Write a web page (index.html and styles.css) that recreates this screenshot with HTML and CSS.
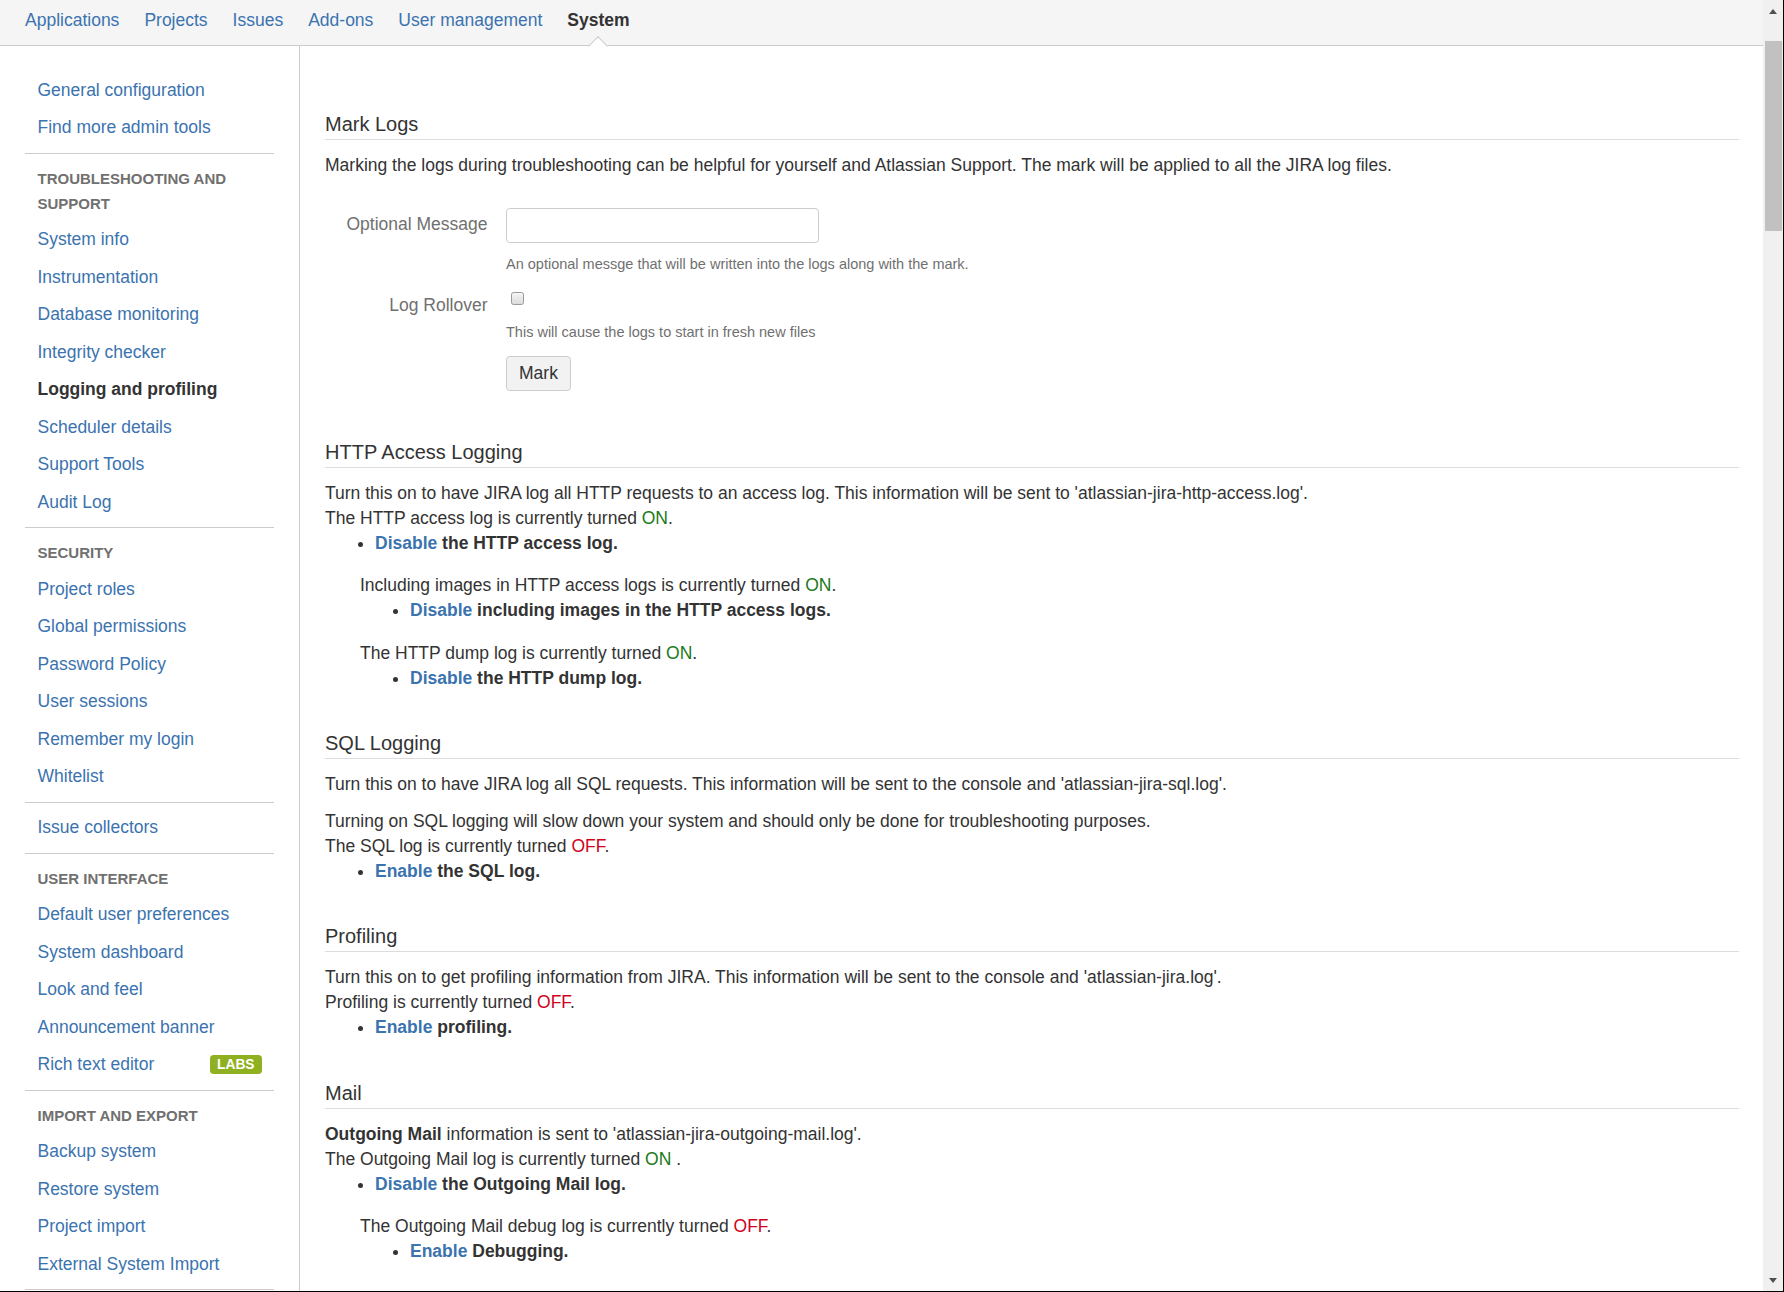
FILE: index.html
```html
<!DOCTYPE html>
<html lang="en">
<head>
    <meta charset="UTF-8">
    <title>Logging and profiling - System</title>
    <link rel="stylesheet" href="styles.css">
</head>
<body>
<div class="window">
    <div class="viewport">
        <header class="topnav">
            <a class="topnav-item" href="#">Applications</a>
            <a class="topnav-item" href="#">Projects</a>
            <a class="topnav-item" href="#">Issues</a>
            <a class="topnav-item" href="#">Add-ons</a>
            <a class="topnav-item" href="#">User management</a>
            <a class="topnav-item active" href="#">System<span class="notch"></span></a>
        </header>

        <div class="page">
            <nav class="sidebar">
                <div class="nav-group">
                    <a class="nav-item" href="#">General configuration</a>
                    <a class="nav-item" href="#">Find more admin tools</a>
                </div>
                <div class="nav-group">
                    <div class="nav-heading">Troubleshooting and support</div>
                    <a class="nav-item" href="#">System info</a>
                    <a class="nav-item" href="#">Instrumentation</a>
                    <a class="nav-item" href="#">Database monitoring</a>
                    <a class="nav-item" href="#">Integrity checker</a>
                    <a class="nav-item selected" href="#">Logging and profiling</a>
                    <a class="nav-item" href="#">Scheduler details</a>
                    <a class="nav-item" href="#">Support Tools</a>
                    <a class="nav-item" href="#">Audit Log</a>
                </div>
                <div class="nav-group">
                    <div class="nav-heading">Security</div>
                    <a class="nav-item" href="#">Project roles</a>
                    <a class="nav-item" href="#">Global permissions</a>
                    <a class="nav-item" href="#">Password Policy</a>
                    <a class="nav-item" href="#">User sessions</a>
                    <a class="nav-item" href="#">Remember my login</a>
                    <a class="nav-item" href="#">Whitelist</a>
                </div>
                <div class="nav-group">
                    <a class="nav-item" href="#">Issue collectors</a>
                </div>
                <div class="nav-group">
                    <div class="nav-heading">User interface</div>
                    <a class="nav-item" href="#">Default user preferences</a>
                    <a class="nav-item" href="#">System dashboard</a>
                    <a class="nav-item" href="#">Look and feel</a>
                    <a class="nav-item" href="#">Announcement banner</a>
                    <a class="nav-item" href="#">Rich text editor <span class="lozenge">Labs</span></a>
                </div>
                <div class="nav-group">
                    <div class="nav-heading">Import and export</div>
                    <a class="nav-item" href="#">Backup system</a>
                    <a class="nav-item" href="#">Restore system</a>
                    <a class="nav-item" href="#">Project import</a>
                    <a class="nav-item" href="#">External System Import</a>
                </div>
                <div class="nav-group"></div>
            </nav>

            <main class="content">
                <h2 class="section-title">Mark Logs</h2>
                <p>Marking the logs during troubleshooting can be helpful for yourself and Atlassian Support. The mark will be applied to all the JIRA log files.</p>

                <form class="mark-form">
                    <div class="field-group">
                        <label for="mark-message">Optional Message</label>
                        <div class="field">
                            <input class="text-input" type="text" id="mark-message">
                            <div class="description">An optional messge that will be written into the logs along with the mark.</div>
                        </div>
                    </div>
                    <div class="field-group">
                        <label class="checkbox-label" for="rollover">Log Rollover</label>
                        <div class="field">
                            <div class="checkbox-row"><input class="checkbox" type="checkbox" id="rollover"></div>
                            <div class="description">This will cause the logs to start in fresh new files</div>
                        </div>
                    </div>
                    <div class="buttons">
                        <button class="button" type="button">Mark</button>
                    </div>
                </form>

                <h2 class="section-title">HTTP Access Logging</h2>
                <p>Turn this on to have JIRA log all HTTP requests to an access log. This information will be sent to 'atlassian-jira-http-access.log'.<br>
                    The HTTP access log is currently turned <span class="on">ON</span>.</p>
                <ul class="actions">
                    <li><a href="#">Disable</a> the HTTP access log.</li>
                </ul>
                <div class="sub-block">
                    Including images in HTTP access logs is currently turned <span class="on">ON</span>.
                    <ul class="actions">
                        <li><a href="#">Disable</a> including images in the HTTP access logs.</li>
                    </ul>
                </div>
                <div class="sub-block">
                    The HTTP dump log is currently turned <span class="on">ON</span>.
                    <ul class="actions">
                        <li><a href="#">Disable</a> the HTTP dump log.</li>
                    </ul>
                </div>

                <h2 class="section-title">SQL Logging</h2>
                <p>Turn this on to have JIRA log all SQL requests. This information will be sent to the console and 'atlassian-jira-sql.log'.</p>
                <p>Turning on SQL logging will slow down your system and should only be done for troubleshooting purposes.<br>
                    The SQL log is currently turned <span class="off">OFF</span>.</p>
                <ul class="actions">
                    <li><a href="#">Enable</a> the SQL log.</li>
                </ul>

                <h2 class="section-title">Profiling</h2>
                <p>Turn this on to get profiling information from JIRA. This information will be sent to the console and 'atlassian-jira.log'.<br>
                    Profiling is currently turned <span class="off">OFF</span>.</p>
                <ul class="actions">
                    <li><a href="#">Enable</a> profiling.</li>
                </ul>

                <h2 class="section-title">Mail</h2>
                <p><strong>Outgoing Mail</strong> information is sent to 'atlassian-jira-outgoing-mail.log'.<br>
                    The Outgoing Mail log is currently turned <span class="on">ON</span> .</p>
                <ul class="actions">
                    <li><a href="#">Disable</a> the Outgoing Mail log.</li>
                </ul>
                <div class="sub-block">
                    The Outgoing Mail debug log is currently turned <span class="off">OFF</span>.
                    <ul class="actions">
                        <li><a href="#">Enable</a> Debugging.</li>
                    </ul>
                </div>
            </main>
        </div>
    </div>

    <div class="scrollbar">
        <div class="sb-button"><span class="arrow-up"></span></div>
        <div class="sb-thumb"></div>
        <div class="sb-track"></div>
        <div class="sb-button"><span class="arrow-down"></span></div>
    </div>
</div>
</body>
</html>
```

FILE: styles.css
```css
html, body {
    margin: 0;
    padding: 0;
}

body {
    font-family: "Liberation Sans", Arial, sans-serif;
    font-size: 17.5px;
    line-height: 25px;
    color: #333;
    background: #fff;
}

a {
    color: #3b73af;
    text-decoration: none;
}

.window {
    display: flex;
    height: 1292px;
    box-sizing: border-box;
    border-right: 1px solid #000;
    border-bottom: 1px solid #000;
    overflow: hidden;
}

.viewport {
    flex: 1;
    display: flex;
    flex-direction: column;
    overflow: hidden;
}

/* top navigation */
.topnav {
    display: flex;
    flex-shrink: 0;
    height: 45px;
    padding-left: 12.5px;
    background: #f5f5f5;
    border-bottom: 1px solid #ccc;
}

.topnav-item {
    position: relative;
    display: block;
    padding: 0 12.5px;
    line-height: 40px;
    height: 45px;
}

.topnav-item.active {
    color: #333;
    font-weight: bold;
}

.notch {
    position: absolute;
    left: 50%;
    bottom: -7.6px;
    width: 14px;
    height: 14px;
    background: #fff;
    border-top: 1px solid #ccc;
    border-left: 1px solid #ccc;
    box-sizing: border-box;
    transform: translateX(-50%) rotate(45deg);
}

.page {
    flex: 1;
    display: flex;
    min-height: 0;
}

/* sidebar */
.sidebar {
    flex-shrink: 0;
    width: 300px;
    box-sizing: border-box;
    padding: 19px 25px 0;
    border-right: 1px solid #ccc;
}

.nav-group {
    padding: 6.25px 0;
}

.nav-group + .nav-group {
    border-top: 1px solid #ccc;
}

.nav-heading {
    padding: 6px 12.5px 5px;
    font-size: 15px;
    font-weight: bold;
    line-height: 25px;
    text-transform: uppercase;
    color: #707070;
}

.nav-item {
    display: block;
    padding: 6.25px 12.5px;
    line-height: 25px;
}

.nav-item.selected {
    color: #333;
    font-weight: bold;
}

.lozenge {
    float: right;
    margin-top: 3px;
    padding: 0 7px;
    line-height: 19px;
    font-size: 13.75px;
    font-weight: bold;
    text-transform: uppercase;
    color: #fff;
    background: #8eb021;
    border-radius: 3.75px;
}

/* main content */
.content {
    flex: 1;
    min-width: 0;
    padding: 25px 24px 0 25px;
}

.section-title {
    margin: 37.5px 0 0;
    font-size: 20px;
    font-weight: normal;
    line-height: 30px;
    color: #333;
    border-bottom: 1px solid #ddd;
}

.content p {
    margin: 12.5px 0 0;
}

.content .section-title + p {
    margin-top: 13px;
}

.content p + p {
    margin-top: 11.5px;
}

.on {
    color: #1a7a1a;
}

.off {
    color: #d0021b;
}

.actions {
    margin: 0;
    padding-left: 50px;
}

.actions li {
    font-weight: bold;
}

.sub-block {
    margin: 17.5px 0 0 35px;
}

/* mark logs form */
.mark-form {
    margin-top: 25px;
}

.field-group {
    display: grid;
    grid-template-columns: 162.5px 1fr;
    column-gap: 18.5px;
    padding: 5px 0;
}

.field-group label {
    padding-top: 4.5px;
    text-align: right;
    color: #707070;
}

.field-group .checkbox-label {
    padding-top: 6px;
}

.text-input {
    display: block;
    width: 312.5px;
    height: 35px;
    box-sizing: border-box;
    margin: 0;
    padding: 4px 6px;
    font: inherit;
    border: 1px solid #ccc;
    border-radius: 3.75px;
    background: #fff;
}

.description {
    margin-top: 9px;
    font-size: 14.5px;
    line-height: 25px;
    color: #707070;
}

.checkbox-row {
    height: 25px;
    box-sizing: border-box;
    padding-top: 5px;
}

.checkbox {
    appearance: none;
    display: block;
    width: 13px;
    height: 13px;
    margin: 0 0 0 5px;
    border: 1px solid #9a9a9a;
    border-radius: 2.5px;
    background: linear-gradient(#f4f4f4, #dcdcdc);
}

.field .checkbox-row + .description {
    margin-top: 8.5px;
}

.buttons {
    padding: 6.25px 0 8px 181px;
}

.button {
    height: 35px;
    padding: 0 12px;
    font: inherit;
    color: #333;
    background: #f2f2f2;
    border: 1px solid #ccc;
    border-radius: 3.75px;
}

/* window scrollbar */
.scrollbar {
    display: flex;
    flex-direction: column;
    flex-shrink: 0;
    width: 20px;
    background: #f0f0f0;
}

.sb-button {
    display: flex;
    align-items: center;
    justify-content: center;
    height: 17px;
    flex-shrink: 0;
}

.arrow-up,
.arrow-down {
    width: 0;
    height: 0;
    border-left: 4.5px solid transparent;
    border-right: 4.5px solid transparent;
}

.arrow-up {
    border-bottom: 5px solid #505050;
    margin-top: 6px;
}

.arrow-down {
    border-top: 5px solid #505050;
    margin-bottom: 4px;
}

.sb-thumb {
    margin: 24px 0 0 2px;
    width: 17px;
    height: 190px;
    background: #c1c1c1;
    flex-shrink: 0;
}

.sb-track {
    flex: 1;
}
```
